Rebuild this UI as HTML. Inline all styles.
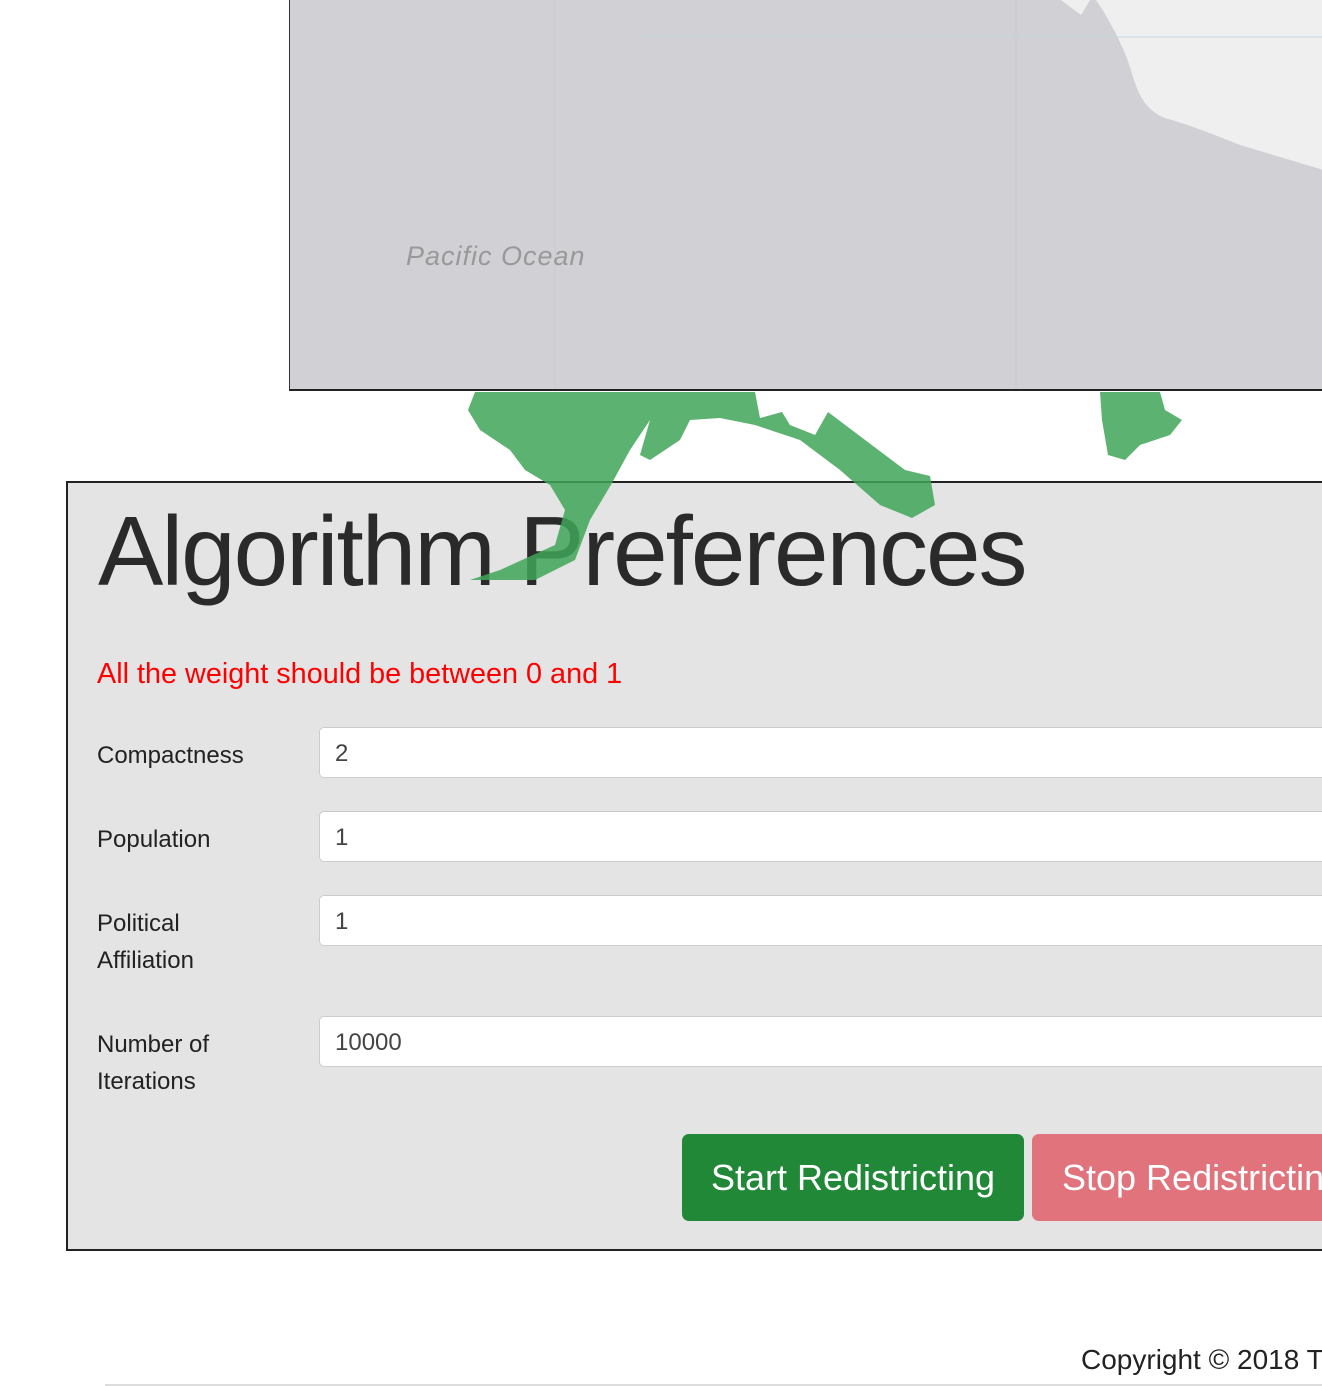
<!DOCTYPE html>
<html><head><style>
body{margin:0;width:1322px;height:1386px;position:relative;overflow:hidden;background:#fff;font-family:"Liberation Sans",sans-serif;color:#222}
.map{position:absolute;left:289px;top:0;width:1040px;height:389px;background:#d1d0d5;border-left:1px solid #333;border-bottom:2px solid #222}
.panel{position:absolute;left:66px;top:481px;width:1270px;height:766px;background:#e4e4e4;border:2px solid #222}
.h{position:absolute;left:30px;top:12px;font-size:98px;font-weight:300;letter-spacing:-2px;color:#2a2a2a;white-space:nowrap}
.err{position:absolute;left:29px;top:175px;font-size:28.8px;color:#f00}
.lbl{position:absolute;left:29px;font-size:24px;line-height:37px;color:#222}
.inp{position:absolute;left:251px;width:1100px;height:51px;background:#fff;border:1px solid #ccc;border-radius:5px;font-size:24px;line-height:51px;padding-left:15px;box-sizing:border-box;color:#444}
.btn{position:absolute;top:651px;height:87px;border-radius:7px;color:#fff;font-size:36px;line-height:87px;white-space:nowrap}
</style></head><body>
<div class="map">
<svg width="1040" height="389" style="position:absolute;left:0;top:0">
<path d="M1040 0 L806 0 C820 20 835 50 841 70 C848 95 855 110 875 118 C900 125 925 135 950 145 L1040 172 Z" fill="#efefef"/>
<path d="M771 0 L791 15 L800 0Z" fill="#efefef"/>
<line x1="265" y1="0" x2="265" y2="389" stroke="#c8ccd4" stroke-width="1"/>
<line x1="726" y1="0" x2="726" y2="389" stroke="#c8ccd4" stroke-width="1"/>
<line x1="340" y1="37" x2="1040" y2="37" stroke="#c8d4dc" stroke-width="1"/>
<text x="116" y="265" font-size="27" font-style="italic" fill="#999" font-family="Liberation Sans" letter-spacing="1">Pacific Ocean</text>
</svg></div>
<div class="panel">
<div class="h">Algorithm Preferences</div>
<div class="err">All the weight should be between 0 and 1</div>
<div class="lbl" style="top:254px">Compactness</div>
<div class="inp" style="top:244px">2</div>
<div class="lbl" style="top:338px">Population</div>
<div class="inp" style="top:328px">1</div>
<div class="lbl" style="top:422px">Political<br>Affiliation</div>
<div class="inp" style="top:412px">1</div>
<div class="lbl" style="top:543px">Number of<br>Iterations</div>
<div class="inp" style="top:533px">10000</div>
<div class="btn" style="left:614px;width:342px;background:#218838;text-align:center">Start Redistricting</div>
<div class="btn" style="left:964px;width:340px;background:#e0737c;padding-left:30px">Stop Redistricting</div>
</div>
<svg width="1322" height="600" style="position:absolute;left:0;top:0;pointer-events:none">
<g fill="#3fa558" opacity="0.85">
<path d="M475 392 L755 392 L760 418 L782 412 L790 425 L815 435 L828 412 L905 470 L930 476 L935 505 L912 518 L880 505 L840 470 L800 440 L755 425 L720 418 L690 420 L680 440 L650 460 L640 455 L650 420 L630 450 L612 483 L590 520 L575 560 L535 580 L470 580 L500 570 L555 545 L565 510 L550 485 L525 470 L510 450 L480 430 L468 410 Z"/>
<path d="M1100 392 L1160 392 L1165 410 L1182 420 L1170 435 L1140 445 L1125 460 L1108 455 L1102 420 Z"/>
</g></svg>
<div style="position:absolute;left:1081px;top:1344px;font-size:28px;color:#222;white-space:nowrap">Copyright © 2018 T</div>
<div style="position:absolute;left:105px;top:1384px;width:1217px;height:2px;background:#ddd"></div>
</body></html>
